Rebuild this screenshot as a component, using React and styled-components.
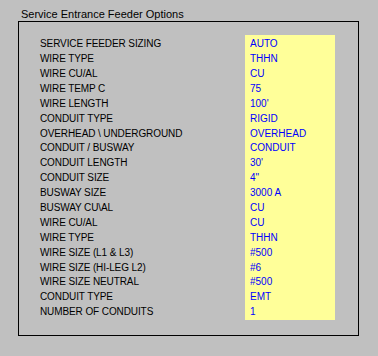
import React from "react";
import styled, { createGlobalStyle } from "styled-components";

const Global = createGlobalStyle`
  html, body { margin: 0; padding: 0; background: #c0c0c0; }
  body { font-family: "Liberation Sans", Arial, sans-serif; }
  #root { width: 378px; height: 356px; background: #c0c0c0; }
`;

const Page = styled.div`
  padding: 7px 0 0 18px;
  box-sizing: border-box;
  width: 378px;
  height: 356px;
`;

const Title = styled.div`
  font-size: 11px;
  line-height: 14px;
  height: 14px;
  color: #000;
  padding-left: 3px;
  white-space: nowrap;
`;

const Frame = styled.div`
  box-sizing: border-box;
  width: 341px;
  height: 315px;
  border: 1px solid #000;
  padding: 13px 0 0 21px;
  display: flex;
  align-items: flex-start;
`;

const Labels = styled.div`
  width: 205px;
  padding-top: 2.2px;
`;

const Values = styled.div`
  box-sizing: border-box;
  width: 90px;
  height: 285px;
  background: #ffff99;
  padding: 2.2px 0 0 5px;
`;

const Cell = styled.div`
  font-size: 10px;
  line-height: 14.9px;
  height: 14.9px;
  white-space: nowrap;
  letter-spacing: ${(p) => (p.$value ? "0" : "-0.1px")};
  color: ${(p) => (p.$value ? "#0000ff" : "#000")};
`;

const rows = [
  ["SERVICE FEEDER SIZING", "AUTO"],
  ["WIRE TYPE", "THHN"],
  ["WIRE CU/AL", "CU"],
  ["WIRE TEMP C", "75"],
  ["WIRE LENGTH", "100'"],
  ["CONDUIT TYPE", "RIGID"],
  ["OVERHEAD \\ UNDERGROUND", "OVERHEAD"],
  ["CONDUIT / BUSWAY", "CONDUIT"],
  ["CONDUIT LENGTH", "30'"],
  ["CONDUIT SIZE", "4\""],
  ["BUSWAY SIZE", "3000 A"],
  ["BUSWAY CU\\AL", "CU"],
  ["WIRE CU/AL", "CU"],
  ["WIRE TYPE", "THHN"],
  ["WIRE SIZE (L1 & L3)", "#500"],
  ["WIRE SIZE (HI-LEG L2)", "#6"],
  ["WIRE SIZE NEUTRAL", "#500"],
  ["CONDUIT TYPE", "EMT"],
  ["NUMBER OF CONDUITS", "1"],
];

export default function App() {
  return (
    <>
      <Global />
      <Page>
        <Title>Service Entrance Feeder Options</Title>
        <Frame>
          <Labels>
            {rows.map(([l], i) => (
              <Cell key={i}>{l}</Cell>
            ))}
          </Labels>
          <Values>
            {rows.map(([, v], i) => (
              <Cell key={i} $value>
                {v}
              </Cell>
            ))}
          </Values>
        </Frame>
      </Page>
    </>
  );
}
